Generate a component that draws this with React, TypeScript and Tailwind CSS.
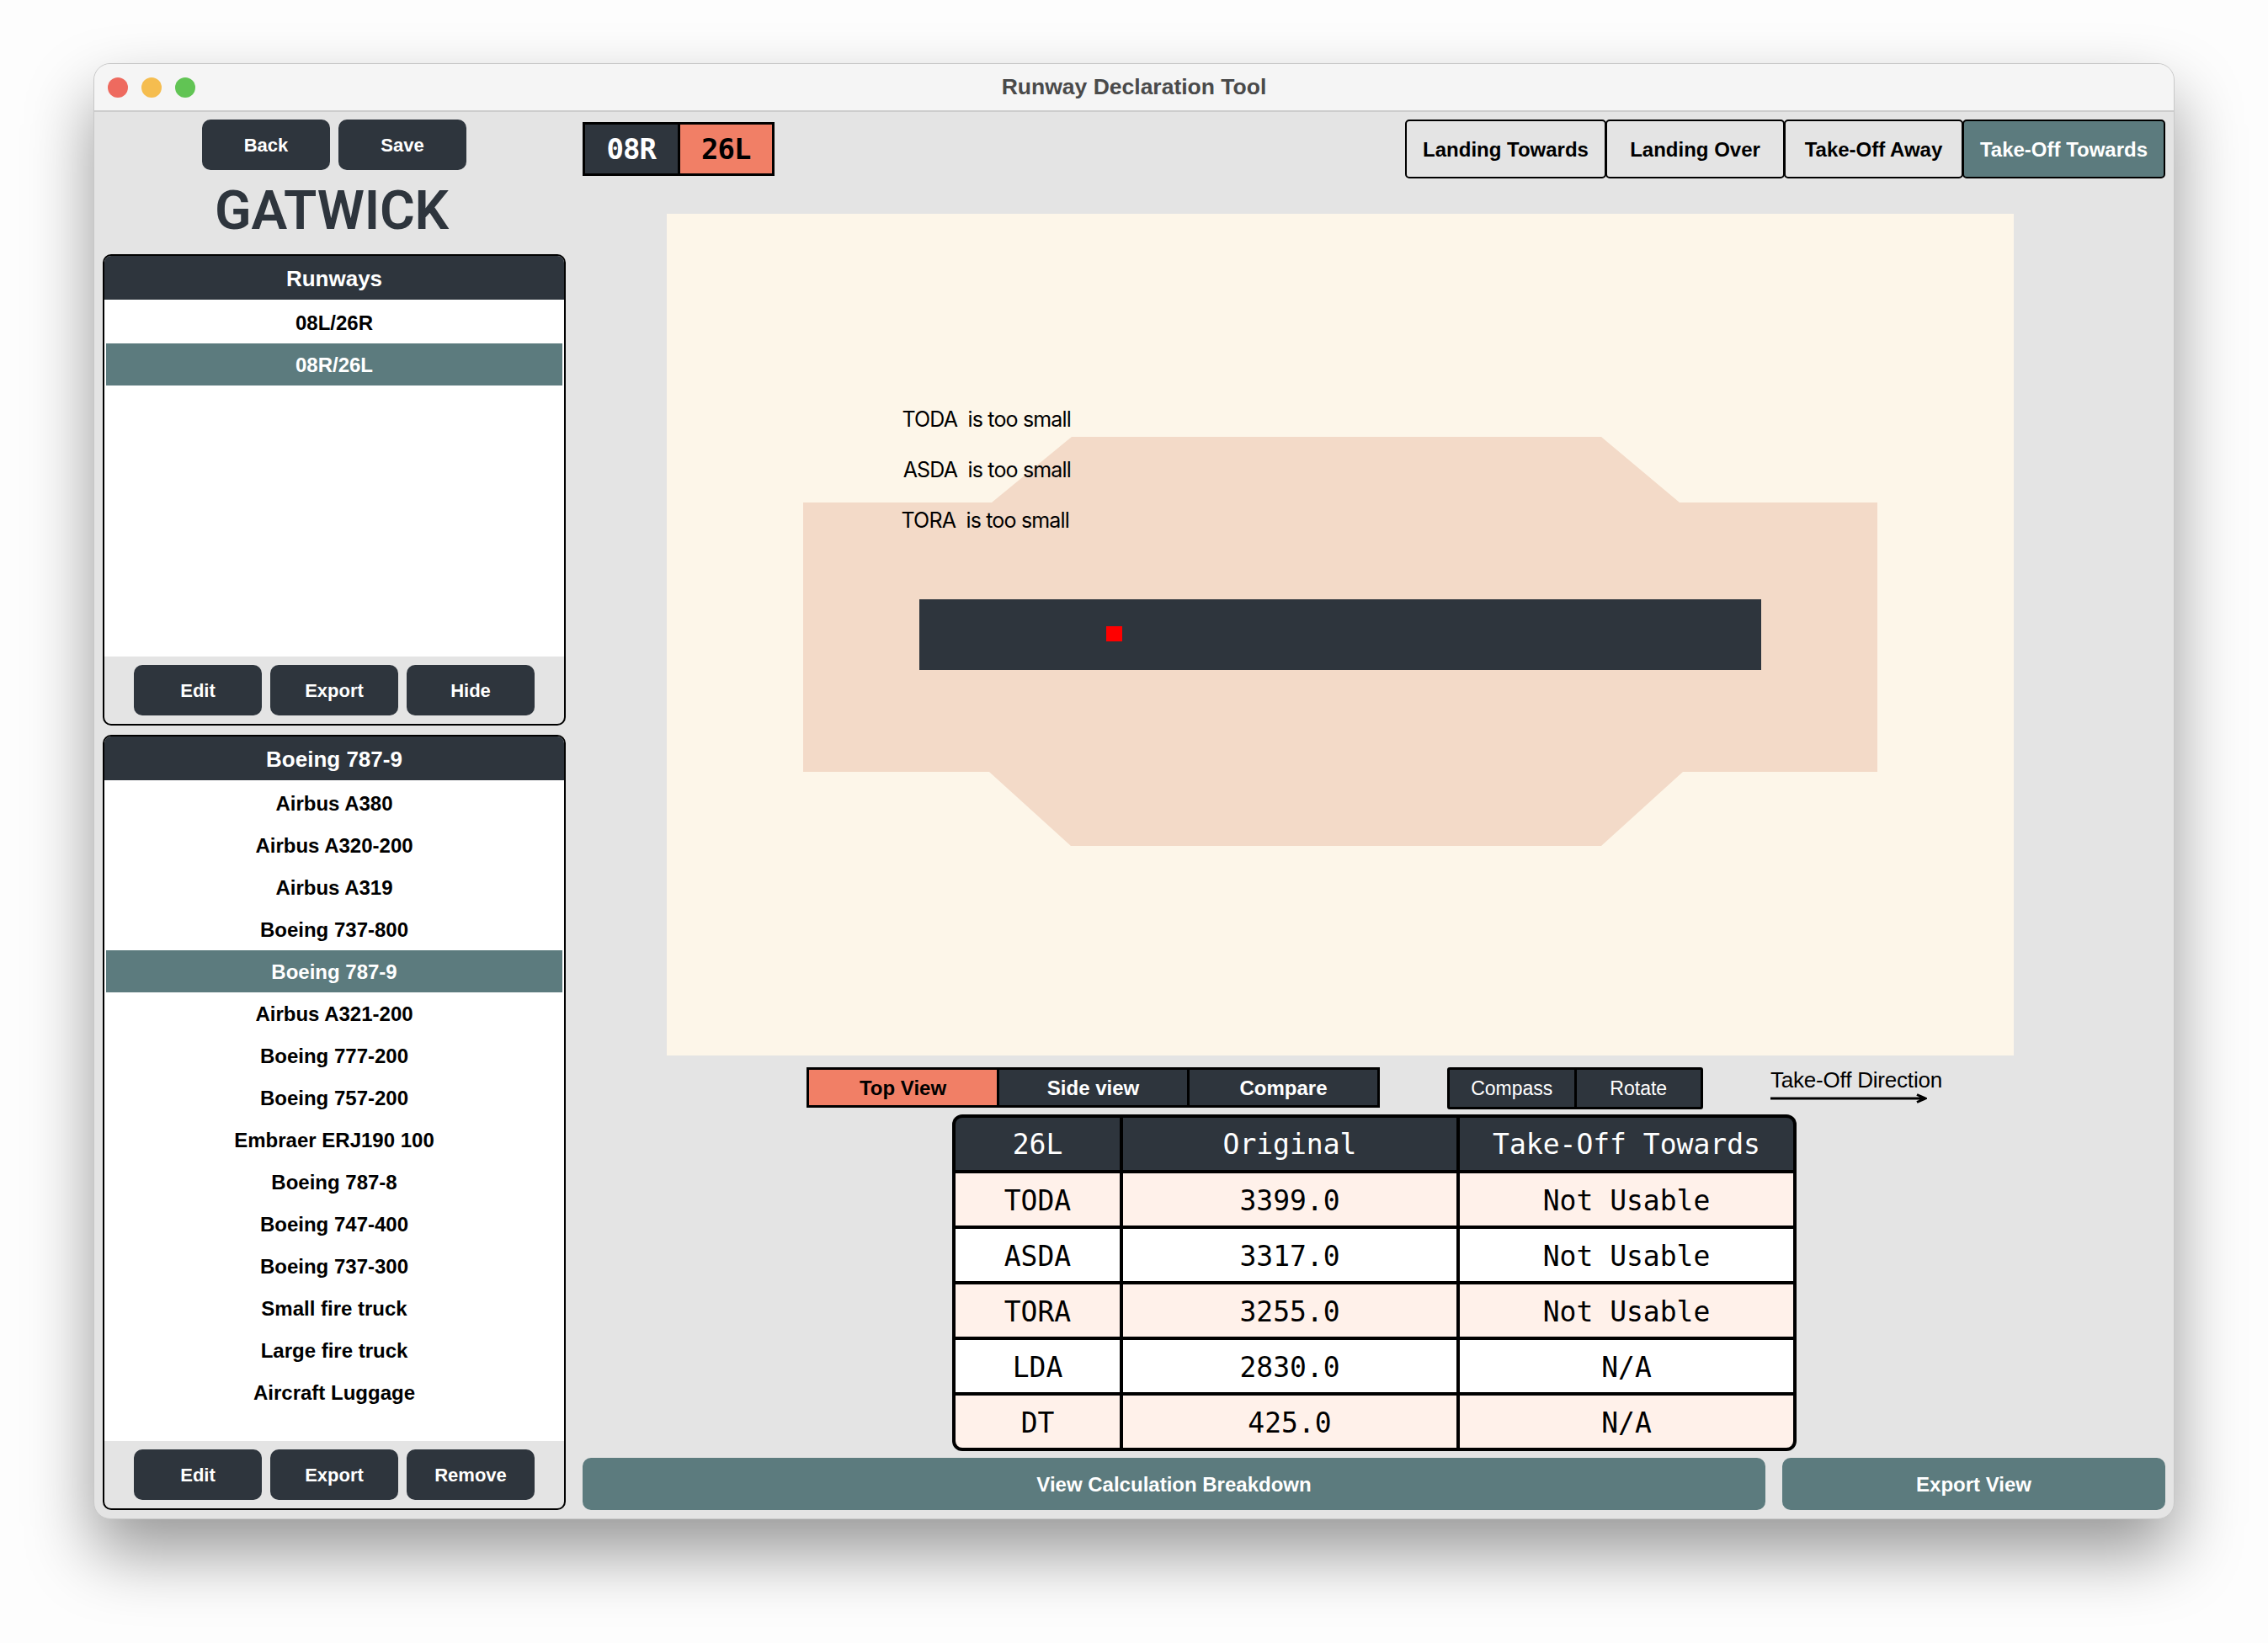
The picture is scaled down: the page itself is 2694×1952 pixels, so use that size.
import { ReactNode } from 'react';

const runways = ['08L/26R', '08R/26L'];
const aircraft = [
  'Airbus A380',
  'Airbus A320-200',
  'Airbus A319',
  'Boeing 737-800',
  'Boeing 787-9',
  'Airbus A321-200',
  'Boeing 777-200',
  'Boeing 757-200',
  'Embraer ERJ190 100',
  'Boeing 787-8',
  'Boeing 747-400',
  'Boeing 737-300',
  'Small fire truck',
  'Large fire truck',
  'Aircraft Luggage',
];

const rows = [
  ['TODA', '3399.0', 'Not Usable'],
  ['ASDA', '3317.0', 'Not Usable'],
  ['TORA', '3255.0', 'Not Usable'],
  ['LDA', '2830.0', 'N/A'],
  ['DT', '425.0', 'N/A'],
];

function DarkButton({ children }: { children: ReactNode }) {
  return (
    <button className="w-[152px] h-[60px] rounded-[10px] bg-[#2e353d] text-white text-[22px] font-bold">
      {children}
    </button>
  );
}

function ListPanel({
  title,
  items,
  selected,
  actions,
  className,
}: {
  title: string;
  items: string[];
  selected: string;
  actions: string[];
  className: string;
}) {
  return (
    <div className={`flex flex-col border-2 border-black rounded-[10px] overflow-hidden ${className}`}>
      <div className="h-[52px] shrink-0 flex items-center justify-center pt-[2px] bg-[#2e353d] text-white text-[26px] font-bold">
        {title}
      </div>
      <div className="flex-1 bg-white p-[2px] text-[24px] font-bold text-black">
        {items.map((item) => (
          <div
            key={item}
            className={
              item === selected
                ? 'h-[50px] flex items-center justify-center pt-[1px] bg-[#5c7b7e] text-white'
                : 'h-[50px] flex items-center justify-center pt-[1px]'
            }
          >
            {item}
          </div>
        ))}
      </div>
      <div className="h-[80px] shrink-0 flex justify-center gap-[10px] pt-[10px]">
        {actions.map((action) => (
          <DarkButton key={action}>{action}</DarkButton>
        ))}
      </div>
    </div>
  );
}

function Canvas() {
  return (
    <div className="relative ml-[100px] w-[1600px] h-[1000px] bg-[#fdf6e9]">
      {/* 滑走路の平面図 */}
      <svg className="absolute inset-0" width="1600" height="1000" viewBox="0 0 1600 1000">
        <polygon
          points="162,343 386,343 481,265 1110,265 1203,343 1438,343 1438,663 1207,663 1110,751 480,751 383,663 162,663"
          fill="#f3dac8"
        />
        <rect x="300" y="458" width="1000" height="84" fill="#2e353d" />
        <rect x="522" y="490" width="19" height="18" fill="#ff0000" />
      </svg>
      <div className="absolute right-[1120px] top-[229px] flex flex-col items-end font-['Inter',sans-serif] text-[25px] tracking-[-0.83px] leading-[30px] gap-[30px] text-black whitespace-pre">
        <div>TODA  is too small</div>
        <div>ASDA  is too small</div>
        <div className="mr-[2px]">TORA  is too small</div>
      </div>
    </div>
  );
}

function Segment({ label, active, className }: { label: string; active?: boolean; className: string }) {
  return (
    <div
      className={`flex items-center justify-center ${className} ${
        active ? 'bg-[#f17f66] text-black' : 'bg-[#2e353d] text-white'
      }`}
    >
      {label}
    </div>
  );
}

function ResultTable() {
  return (
    <div className="ml-[439px] mt-[6px] w-[1003px] h-[400px] p-[4px] bg-black rounded-[12px]">
      <div className="grid grid-cols-[195px_396px_396px] grid-rows-[repeat(6,62px)] gap-[4px] font-['DejaVu_Sans_Mono',monospace] text-[33px] overflow-hidden rounded-[8px]">
        {['26L', 'Original', 'Take-Off Towards'].map((h) => (
          <div key={h} className="flex items-center justify-center pt-[2px] bg-[#2e353d] text-white whitespace-pre">
            {h}
          </div>
        ))}
        {rows.map((row, i) =>
          row.map((cell) => (
            <div
              key={row[0] + cell}
              className={`flex items-center justify-center pt-[4px] text-black ${i % 2 === 0 ? 'bg-[#fff1ea]' : 'bg-white'}`}
            >
              {cell}
            </div>
          )),
        )}
      </div>
    </div>
  );
}

export default function App() {
  return (
    <div className="w-[2694px] h-[1952px] bg-[#fdfdfd] pt-[75px] pl-[111px] font-['Liberation_Sans',sans-serif]">
      <div className="w-[2472px] h-[1730px] rounded-[20px] overflow-hidden bg-[#e4e4e4] flex flex-col shadow-[0_40px_80px_rgba(0,0,0,0.4)] border border-[#c8c8c8]">
        {/* タイトルバー */}
        <div className="relative h-[57px] shrink-0 flex items-center justify-center bg-[#f5f5f5] border-b-2 border-[#cdcdcd]">
          <div className="absolute left-[16px] flex gap-[16px]">
            <span className="w-[24px] h-[24px] rounded-full bg-[#ee6a5f]" />
            <span className="w-[24px] h-[24px] rounded-full bg-[#f5bd4f]" />
            <span className="w-[24px] h-[24px] rounded-full bg-[#61c454]" />
          </div>
          <span className="text-[26.5px] font-bold text-[#4a4a4a]">Runway Declaration Tool</span>
        </div>

        <div className="flex-1 flex pl-[10px]">
          {/* 左カラム */}
          <div className="w-[550px] shrink-0 flex flex-col pt-[9px]">
            <div className="flex justify-center gap-[10px]">
              <DarkButton>Back</DarkButton>
              <DarkButton>Save</DarkButton>
            </div>
            <div className="h-[100px] flex items-center justify-center pb-[2px] pr-[6px] font-['Roboto',sans-serif] font-semibold text-[64px] leading-none tracking-[-0.2px] text-[#2e353d]">
              GATWICK
            </div>
            <ListPanel
              className="h-[560px]"
              title="Runways"
              items={runways}
              selected="08R/26L"
              actions={['Edit', 'Export', 'Hide']}
            />
            <ListPanel
              className="h-[921px] mt-[11px]"
              title="Boeing 787-9"
              items={aircraft}
              selected="Boeing 787-9"
              actions={['Edit', 'Export', 'Remove']}
            />
          </div>

          {/* 右カラム */}
          <div className="w-[1880px] ml-[20px] flex flex-col pt-[9px]">
            <div className="h-[112px] shrink-0 flex justify-between items-start">
              <div className="mt-[3px] flex w-[228px] h-[64px] border-[3px] border-black bg-black gap-[3px] font-['DejaVu_Sans_Mono',monospace] font-bold text-[34px] tracking-[-1px]">
                <Segment label="08R" className="flex-1" />
                <Segment label="26L" active className="flex-1" />
              </div>
              <div className="flex text-[24px] font-bold text-black">
                {['Landing Towards', 'Landing Over', 'Take-Off Away', 'Take-Off Towards'].map((t, i) => (
                  <div
                    key={t}
                    className={`h-[70px] flex items-center justify-center pt-[2px] border-2 border-black rounded-[5px] ${
                      ['w-[239px]', 'w-[213px]', 'w-[213px]', 'w-[241px]'][i]
                    } ${i === 3 ? 'bg-[#5c7b7e] text-white' : ''} ${i > 0 ? '-ml-[1px]' : ''}`}
                  >
                    {t}
                  </div>
                ))}
              </div>
            </div>

            <Canvas />

            <div className="mt-[14px] h-[50px] flex items-start">
              <div className="ml-[266px] flex w-[681px] h-[48px] pt-0 border-[3px] border-black bg-black gap-[3px] text-[24px] font-bold">
                <Segment label="Top View" active className="flex-1 pt-[2px]" />
                <Segment label="Side view" className="flex-1 pt-[2px]" />
                <Segment label="Compare" className="flex-1 pt-[2px]" />
              </div>
              <div className="ml-[80px] flex w-[304px] h-[50px] border-[3px] border-black bg-black gap-[3px] rounded-[3px] text-[23px]">
                <Segment label="Compass" className="flex-1" />
                <Segment label="Rotate" className="flex-1" />
              </div>
              <div className="ml-[80px] flex flex-col text-[26px] leading-[30px] tracking-[-0.2px] text-black">
                <span>Take-Off Direction</span>
                <svg width="186" height="12" viewBox="0 0 186 12" className="mt-[1px]">
                  <path d="M0 6H183M174 1.5L184 6L174 10.5" fill="none" stroke="#000" strokeWidth="3" />
                </svg>
              </div>
            </div>

            <ResultTable />

            <div className="mt-[8px] flex gap-[20px] text-[24px] font-bold text-white">
              <button className="w-[1405px] h-[62px] pt-[2px] rounded-[10px] bg-[#5c7b7e]">View Calculation Breakdown</button>
              <button className="w-[455px] h-[62px] pt-[2px] rounded-[10px] bg-[#5c7b7e]">Export View</button>
            </div>
          </div>
        </div>
      </div>
    </div>
  );
}
